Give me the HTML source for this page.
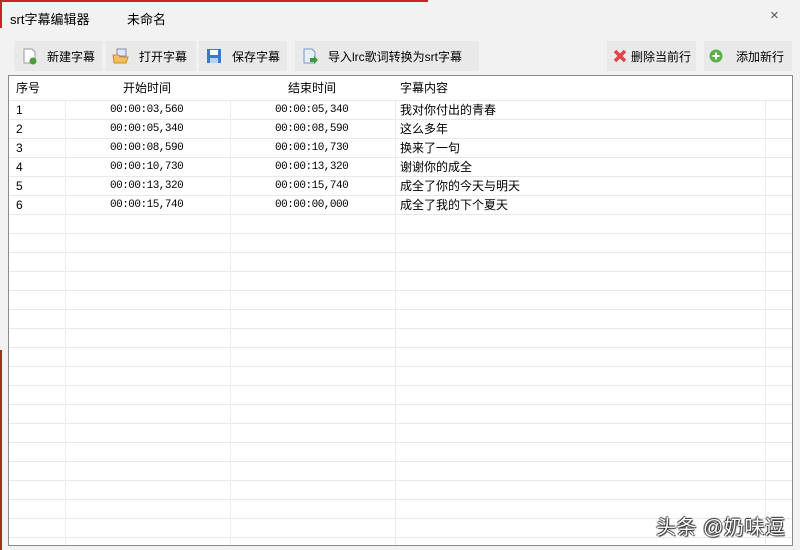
<!DOCTYPE html>
<html><head><meta charset="utf-8"><style>
body{margin:0;width:800px;height:550px;background:#f2f2f2;position:relative;overflow:hidden;font-family:"Liberation Sans","Noto Sans CJK SC",sans-serif;font-size:12px;color:#000}
.a{position:absolute}
.btn{position:absolute;top:41px;height:30px;background:#e9e9e9;display:flex;align-items:center;font-size:12px}
.btn svg{margin:0 9px 0 6px}
.tbl{position:absolute;left:8px;top:75px;width:783px;height:469px;border:1px solid #8a8a8a;background:#fff;
background-image:linear-gradient(#e8e8e8 1px,transparent 1px);background-size:100% 19px;background-position:0 24px;overflow:hidden}
.v{position:absolute;top:0;bottom:0;width:1px;background:#ececec}
.r{position:absolute;left:0;width:100%;height:19px;line-height:19px}
.r span{position:absolute}
.t{font-family:"Liberation Mono",monospace;font-size:11px;letter-spacing:-0.5px}
</style></head><body>
<div class="a" style="left:0;top:0;width:428px;height:2px;background:#c8242a"></div>
<div class="a" style="left:0;top:0;width:2px;height:28px;background:#c8242a"></div>
<div class="a" style="left:0;top:350px;width:2px;height:200px;background:#a52a20"></div>
<div class="a" style="left:10px;top:9px;font-size:13px">srt字幕编辑器</div>
<div class="a" style="left:127px;top:9px;font-size:13px">未命名</div>
<div class="a" style="left:770px;top:7px;font-size:15px;color:#555">×</div>
<div class="btn" style="left:14px;width:88px"><svg width="18" height="18"><path d="M4 2h8l3 3v11H4z" fill="#fff" stroke="#999"/><circle cx="13" cy="14" r="3.5" fill="#4a9d3a"/></svg>新建字幕</div>
<div class="btn" style="left:106px;width:90px"><svg width="18" height="18"><path d="M5 2h9v7H5z" fill="#dde8f4" stroke="#88a"/><path d="M1 8h6l1 2h8l-2 6H2z" fill="#f0c060" stroke="#c9902a"/></svg>打开字幕</div>
<div class="btn" style="left:199px;width:88px"><svg width="18" height="18"><rect x="2" y="2" width="14" height="14" fill="#3a7cc2"/><rect x="5" y="3" width="8" height="5" fill="#fff"/><rect x="5" y="11" width="8" height="5" fill="#b9d3ee"/></svg>保存字幕</div>
<div class="btn" style="left:295px;width:184px"><svg width="18" height="18"><path d="M3 2h8l3 3v11H3z" fill="#e6eef7" stroke="#7a9cc0"/><path d="M9 11h4v-2l4 4-4 4v-2H9z" fill="#3c9a3c"/></svg>导入lrc歌词转换为srt字幕</div>
<div class="btn" style="left:607px;width:89px"><svg width="16" height="16" style="margin:0 3px 0 5px"><path d="M3 3L13 13M13 3L3 13" stroke="#e0444a" stroke-width="3.5"/></svg>删除当前行</div>
<div class="btn" style="left:704px;width:88px"><svg width="16" height="16" style="margin:0 12px 0 4px"><circle cx="8" cy="8" r="6.5" fill="#5cb04a"/><path d="M8 4.5v7M4.5 8h7" stroke="#fff" stroke-width="2"/></svg>添加新行</div>
<div class="tbl">
<div class="v" style="left:56px"></div><div class="v" style="left:221px"></div><div class="v" style="left:386px"></div><div class="v" style="left:756px"></div>
<div style="position:absolute;left:0;top:0;width:100%;height:24px;background:#fff;border-bottom:1px solid #e8e8e8"></div>
<div class="r" style="top:3px"><span style="left:7px">序号</span><span style="left:114px">开始时间</span><span style="left:279px">结束时间</span><span style="left:391px">字幕内容</span></div>
<div class="r" style="top:25px"><span style="left:7px">1</span><span class="t" style="left:101px">00:00:03,560</span><span class="t" style="left:266px">00:00:05,340</span><span style="left:391px">我对你付出的青春</span></div>
<div class="r" style="top:44px"><span style="left:7px">2</span><span class="t" style="left:101px">00:00:05,340</span><span class="t" style="left:266px">00:00:08,590</span><span style="left:391px">这么多年</span></div>
<div class="r" style="top:63px"><span style="left:7px">3</span><span class="t" style="left:101px">00:00:08,590</span><span class="t" style="left:266px">00:00:10,730</span><span style="left:391px">换来了一句</span></div>
<div class="r" style="top:82px"><span style="left:7px">4</span><span class="t" style="left:101px">00:00:10,730</span><span class="t" style="left:266px">00:00:13,320</span><span style="left:391px">谢谢你的成全</span></div>
<div class="r" style="top:101px"><span style="left:7px">5</span><span class="t" style="left:101px">00:00:13,320</span><span class="t" style="left:266px">00:00:15,740</span><span style="left:391px">成全了你的今天与明天</span></div>
<div class="r" style="top:120px"><span style="left:7px">6</span><span class="t" style="left:101px">00:00:15,740</span><span class="t" style="left:266px">00:00:00,000</span><span style="left:391px">成全了我的下个夏天</span></div>
</div>
<div class="a" style="left:656px;top:511px;font-size:20px;letter-spacing:0.5px;color:#fff;text-shadow:1px 1px 1px #222,-1px 0 1px #222,0 -1px 1px #222">头条 @奶味逗</div>
</body></html>
